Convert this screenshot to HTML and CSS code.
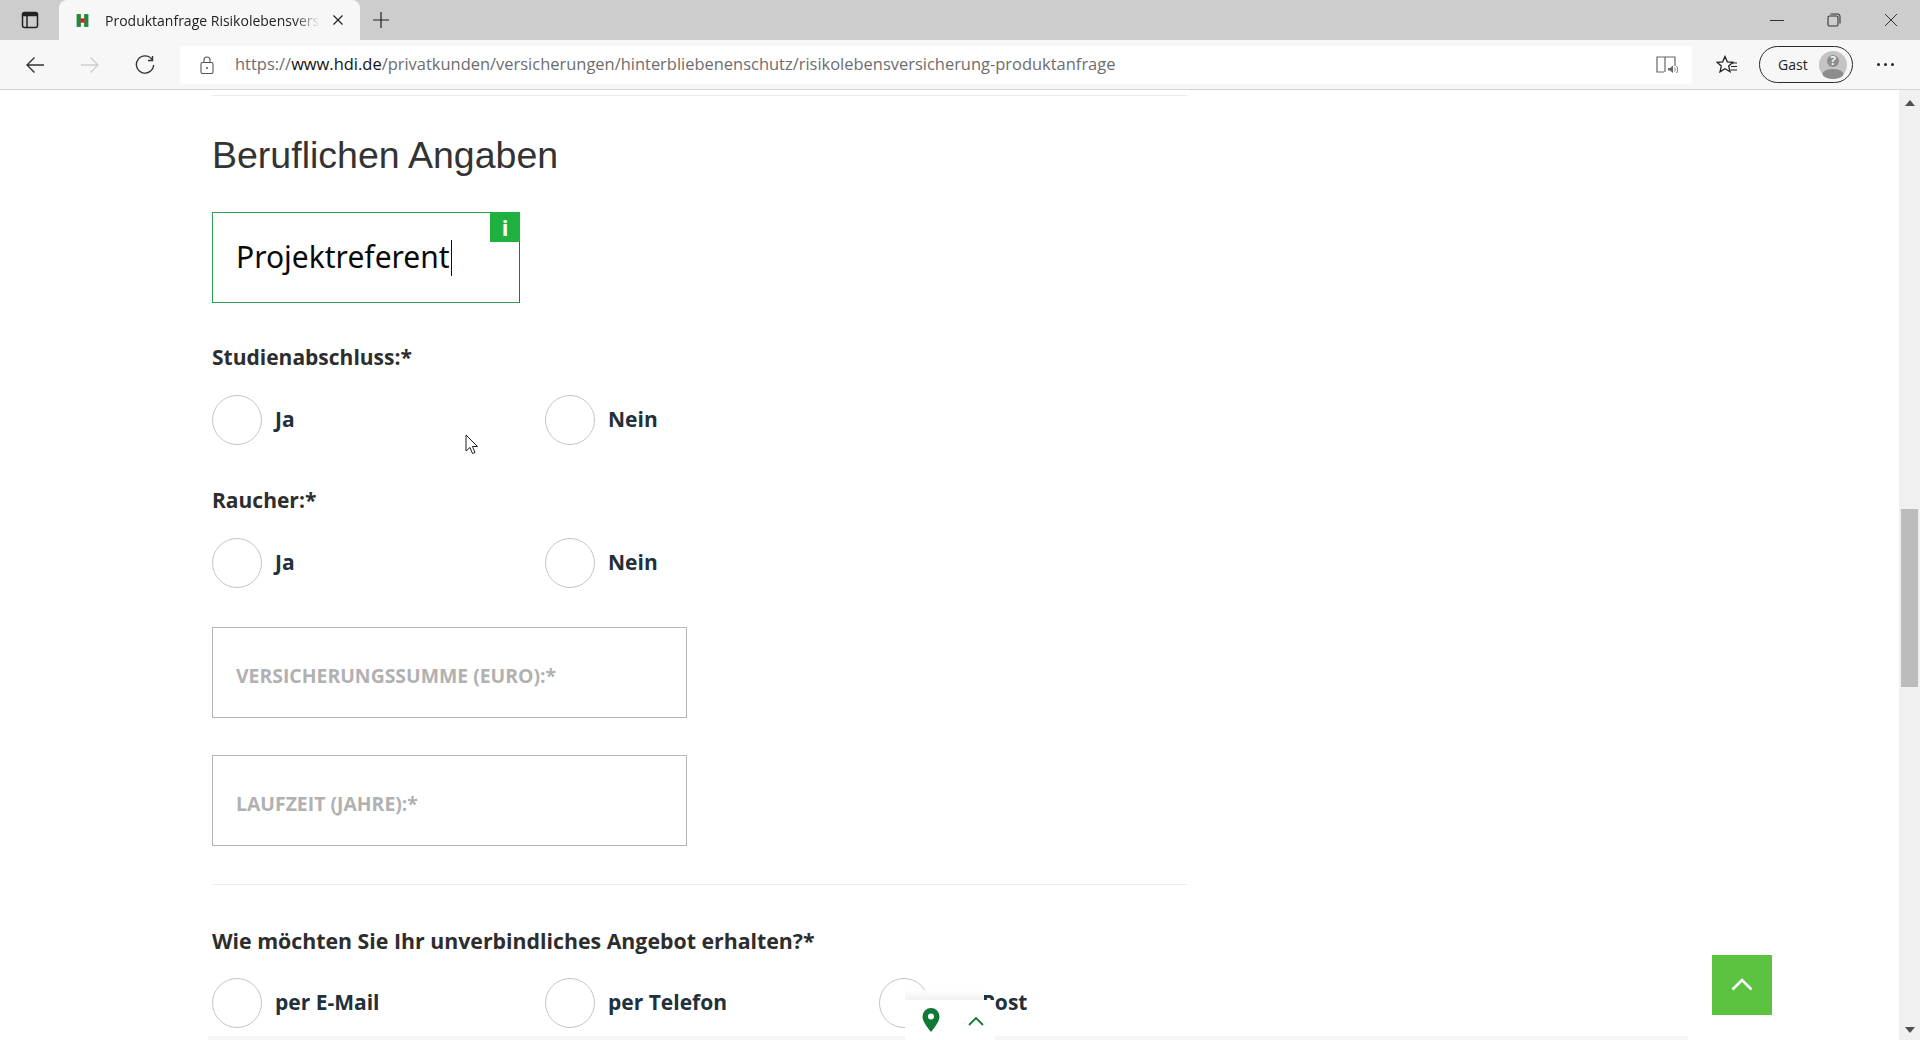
FILE: index.html
```html
<!DOCTYPE html>
<html lang="de">
<head>
<meta charset="utf-8">
<title>Produktanfrage Risikolebensversicherung</title>
<link rel="stylesheet" href="styles.css">
</head>
<body>
<div class="window">
  <header class="tabstrip">
    <div class="tabs-btn">
      <svg width="20" height="20" viewBox="0 0 20 20" fill="none" stroke="#222" stroke-width="1.5"><rect x="2.5" y="2.5" width="15" height="15" rx="2"/><path d="M3 4.5h14" stroke-width="3.5"/><path d="M7 6v11"/></svg>
    </div>
    <div class="tab">
      <svg class="favicon" width="15" height="15" viewBox="0 0 14 14"><rect x="1.5" y="1" width="4" height="12" fill="#1f8a3c"/><rect x="8.5" y="1" width="4" height="12" fill="#1f8a3c"/><rect x="5" y="5" width="4" height="4" fill="#c4222b"/></svg>
      <span class="tab-title">Produktanfrage Risikolebensvers</span>
      <svg class="tab-close" width="12" height="12" viewBox="0 0 12 12" stroke="#222" stroke-width="1.2"><path d="M1.5 1.5l9 9M10.5 1.5l-9 9"/></svg>
    </div>
    <svg class="new-tab" width="18" height="18" viewBox="0 0 18 18" stroke="#222" stroke-width="1.2"><path d="M9 1v16M1 9h16"/></svg>
    <div class="win-controls">
      <svg width="14" height="14" viewBox="0 0 14 14" stroke="#333" stroke-width="1"><path d="M0 7.5h14"/></svg>
      <svg width="14" height="14" viewBox="0 0 14 14" fill="none" stroke="#333" stroke-width="1.1"><rect x="1" y="3" width="10" height="10" rx="1.5"/><path d="M3.5 1h7a2.5 2.5 0 0 1 2.5 2.5v7"/></svg>
      <svg width="14" height="14" viewBox="0 0 14 14" stroke="#333" stroke-width="1"><path d="M1 1l12 12M13 1L1 13"/></svg>
    </div>
  </header>
  <nav class="toolbar">
    <svg class="nav back" width="20" height="20" viewBox="0 0 20 20" fill="none" stroke="#333" stroke-width="1.4"><path d="M19 10H2M9.5 2.5L2 10l7.5 7.5"/></svg>
    <svg class="nav forward" width="20" height="20" viewBox="0 0 20 20" fill="none" stroke="#cfcfcf" stroke-width="1.4"><path d="M1 10h17M10.500 2.500L18 10l-7.500 7.500"/></svg>
    <svg class="nav reload" width="20" height="20" viewBox="0 0 20 20" fill="none" stroke="#333" stroke-width="1.4"><path d="M17 4.500A8.600 8.600 0 1 0 18.600 10"/><path d="M17.500 1v4.500H13"/></svg>
    <div class="address">
      <svg class="lock" width="14" height="18" viewBox="0 0 14 18" fill="none" stroke="#555" stroke-width="1.1"><rect x="1" y="6.500" width="12" height="11" rx="1.500"/><path d="M4 6.500V4a3 3 0 0 1 6 0v2.500"/><circle cx="7" cy="12" r="1" fill="#555" stroke="none"/></svg>
      <span class="url"><span class="url-dim">https://</span><span class="url-host">www.hdi.de</span><span class="url-dim">/privatkunden/versicherungen/hinterbliebenenschutz/risikolebensversicherung-produktanfrage</span></span>
      <svg class="read" width="22" height="20" viewBox="0 0 22 20" fill="none" stroke="#666" stroke-width="1.200"><path d="M8 17H1V2h8v15M9 2h10v9"/><path d="M12 13h2l3-2.500v7.500l-3-2.500h-2z" fill="#666" stroke="none"/><path d="M18.500 12.500c1 1 1 3 0 4M20.500 11c1.500 2 1.500 5 0 7" stroke-width="0.900"/></svg>
    </div>
    <svg class="fav" width="22" height="20" viewBox="0 0 22 20" fill="none" stroke="#222" stroke-width="1.300"><path d="M9 1.500l2.300 5.300 5.700.5-4.300 3.800 1.300 5.600L9 13.800l-5 3 1.300-5.700L1 7.300l5.700-.5z"/><path d="M15 8h6M15 11.500h6M14.500 15h6.500" stroke-width="1.100"/></svg>
    <div class="profile">
      <span class="profile-name">Gast</span>
      <svg class="avatar" width="28" height="28" viewBox="0 0 28 28"><circle cx="14" cy="14" r="14" fill="#c4c4c4"/><ellipse cx="14" cy="23" rx="10.500" ry="5" fill="#8d8d8d"/><circle cx="14" cy="10" r="6" fill="#8d8d8d"/><text x="14" y="13.500" class="avatar-q">?</text></svg>
    </div>
    <div class="more"><i></i><i></i><i></i></div>
  </nav>
  <div class="viewport">
    <main class="page">
      <hr class="rule rule-top">
      <h2 class="section-title">Beruflichen Angaben</h2>
      <div class="field field-short field-active">
        <span class="typed">Projektreferent</span><span class="caret"></span>
        <span class="info">i</span>
      </div>
      <p class="question q-study">Studienabschluss:*</p>
      <div class="radios">
        <label class="radio"><span class="dot"></span>Ja</label>
        <label class="radio"><span class="dot"></span>Nein</label>
      </div>
      <p class="question q-smoker">Raucher:*</p>
      <div class="radios">
        <label class="radio"><span class="dot"></span>Ja</label>
        <label class="radio"><span class="dot"></span>Nein</label>
      </div>
      <div class="field field-wide field-first"><span class="placeholder">VERSICHERUNGSSUMME (EURO):*</span></div>
      <div class="field field-wide field-second"><span class="placeholder">LAUFZEIT (JAHRE):*</span></div>
      <hr class="rule rule-mid">
      <p class="question q-offer">Wie möchten Sie Ihr unverbindliches Angebot erhalten?*</p>
      <div class="radios radios-offer">
        <label class="radio"><span class="dot"></span>per E-Mail</label>
        <label class="radio"><span class="dot"></span>per Telefon</label>
        <label class="radio"><span class="dot"></span>per Post</label>
      </div>
    </main>
    <div class="bottom-band"></div>
    <aside class="scrollbar">
      <svg class="arrow" width="10" height="6" viewBox="0 0 10 6"><path d="M5 0l5 6H0z" fill="#505050"/></svg>
      <div class="thumb"></div>
      <svg class="arrow" width="10" height="6" viewBox="0 0 10 6"><path d="M5 6l5-6H0z" fill="#505050"/></svg>
    </aside>
    <div class="locator">
      <svg width="18" height="24" viewBox="0 0 18 24"><path fill-rule="evenodd" d="M9 0a8.500 8.500 0 0 1 8.500 8.500C17.500 14 12 20 9 24 6 20 .5 14 .5 8.500A8.500 8.500 0 0 1 9 0zm0 5.500a3 3 0 1 0 0 6 3 3 0 0 0 0-6z" fill="#0f7a36"/></svg>
      <svg class="locator-chevron" width="16" height="10" viewBox="0 0 16 10" fill="none" stroke="#0f7a36" stroke-width="1.800"><path d="M1 9l7-7 7 7"/></svg>
    </div>
    <button class="to-top" type="button" aria-label="Nach oben">
      <svg width="22" height="14" viewBox="0 0 22 14" fill="none" stroke="#fff" stroke-width="2.600"><path d="M1.500 12.500L11 3l9.500 9.500"/></svg>
    </button>
    <svg class="cursor" width="14" height="21" viewBox="0 0 14 21"><path d="M1 1v16l4-3.500 2.500 6 2.500-1-2.500-6H12.500z" fill="#fff" stroke="#222" stroke-width="1"/></svg>
  </div>
</div>
</body>
</html>
```

FILE: styles.css
```css
* { box-sizing: border-box; }
html, body { margin: 0; height: 100%; overflow: hidden; background: #fff; }
.window { width: 1920px; height: 1040px; display: flex; flex-direction: column; font-family: "Open Sans", "Noto Sans", sans-serif; }

.tabstrip { height: 40px; background: #cdcdcd; display: flex; align-items: center; position: relative; }
.tabs-btn { width: 59px; height: 40px; display: flex; align-items: center; justify-content: center; }
.tab { width: 301px; height: 40px; background: #f7f7f7; border-radius: 8px 8px 0 0; display: flex; align-items: center; padding: 0 13px 0 16px; }
.favicon { flex: none; }
.tab-title { margin-left: 15px; width: 215px; white-space: nowrap; overflow: hidden; font: 14px "Open Sans", sans-serif; color: #222; -webkit-mask-image: linear-gradient(to right, #000 88%, transparent); mask-image: linear-gradient(to right, #000 88%, transparent); }
.tab-close { margin-left: 12px; flex: none; }
.new-tab { margin-left: 12px; }
.win-controls { margin-left: auto; display: flex; gap: 43px; padding-right: 22px; align-items: center; }

.toolbar { height: 50px; background: #f7f7f7; border-bottom: 1px solid #d4d4d4; display: flex; align-items: center; }
.nav { flex: none; }
.back { margin-left: 25px; }
.forward { margin-left: 35px; }
.reload { margin-left: 35px; }
.address { margin-left: 25px; width: 1512px; height: 38px; background: #fff; border-radius: 3px; display: flex; align-items: center; padding: 0 14px 0 20px; }
.lock { flex: none; }
.url { margin-left: 21px; margin-top: -2px; font: 16.470px "Open Sans", sans-serif; white-space: nowrap; }
.url-dim { color: #6d6d6d; }
.url-host { color: #111; }
.read { margin-left: auto; }
.fav { margin-left: 24px; flex: none; }
.profile { margin-left: 21px; width: 94px; height: 37px; border: 1.500px solid #2a2a2a; border-radius: 19px; display: flex; align-items: center; justify-content: space-between; padding: 0 5px 0 18px; flex: none; }
.profile-name { font: 14px "Open Sans", sans-serif; color: #222; }
.avatar-q { font: bold 12px "Open Sans", sans-serif; fill: #f2f2f2; text-anchor: middle; }
.more { margin-left: 24px; display: flex; gap: 4px; }
.more i { width: 3px; height: 3px; background: #222; border-radius: 50%; }

.viewport { flex: 1; position: relative; overflow: hidden; background: #fff; }
.page { padding-left: 212px; width: 1899px; }
.rule { border: 0; height: 1px; background: #ececec; margin: 0; width: 975px; }
.rule-top { margin-top: 5px; }
.section-title { margin: 34px 0 0; font: 400 37.500px/50px "Liberation Sans", Arial, sans-serif; color: #333; }
.field { border: 1px solid #b5b5b5; display: flex; align-items: center; padding-left: 23px; position: relative; height: 91px; }
.field-short { width: 308px; margin-top: 32px; }
.field-active { border-color: #2e9e50; border-right-color: #555; }
.typed { font: 400 30px "Noto Sans", sans-serif; color: #0a0a0a; margin-top: -2px; }
.caret { width: 1px; height: 36px; background: #111; margin-left: 1px; }
.info { position: absolute; top: -1px; right: -1px; width: 30px; height: 30px; background: #1fb13f; color: #fff; font: 700 22px/30px "Open Sans", sans-serif; text-align: center; }
.question { margin: 0; font: 700 21px/30px "Open Sans", sans-serif; color: #2d2d2d; }
.q-study { margin-top: 39px; }
.q-smoker { margin-top: 40px; }
.q-offer { margin-top: 41px; font-size: 21.300px; }
.radios { display: flex; margin-top: 23px; }
.radios-offer { margin-top: 22px; }
.radio { width: 333px; height: 50px; padding-bottom: 2px; display: flex; align-items: center; gap: 13px; font: 700 21px "Open Sans", sans-serif; color: #22303a; }
.radios-offer .radio:last-child { margin-left: 1px; gap: 12px; }
.dot { width: 50px; height: 50px; margin-bottom: -2px; border: 1.500px solid #c4c4c4; border-radius: 50%; background: #fff; flex: none; }
.field-wide { width: 475px; }
.field-first { margin-top: 39px; }
.field-second { margin-top: 37px; }
.placeholder { font: 700 19.400px "Open Sans", sans-serif; color: #b1b1b1; margin-top: 5px; }
.rule-mid { margin-top: 38px; }

.bottom-band { position: absolute; left: 208px; width: 1480px; bottom: 0; height: 4px; background: #f6f6f6; }
.scrollbar { position: absolute; top: 0; right: 0; bottom: 0; width: 21px; background: #f0f0f0; display: flex; flex-direction: column; align-items: center; justify-content: space-between; padding: 10px 0 7px; }
.thumb { position: absolute; top: 419px; left: 2px; width: 17px; height: 178px; background: #bcbcbc; }
.locator { position: absolute; left: 905px; bottom: 0; width: 90px; height: 40px; background: #fff; display: flex; align-items: center; justify-content: space-between; padding: 0 11px 0 17px; }
.locator::before { content: ""; position: absolute; left: 0; top: -10px; width: 79px; height: 10px; background: linear-gradient(rgba(255,255,255,.9), #f1f1f1); }
.locator-chevron { margin-top: 2px; }
.to-top { position: absolute; left: 1712px; top: 865px; width: 60px; height: 60px; padding: 0 0 2px; border: 0; background: #5bc340; display: flex; align-items: center; justify-content: center; }
.cursor { position: absolute; left: 465px; top: 344px; }
```
